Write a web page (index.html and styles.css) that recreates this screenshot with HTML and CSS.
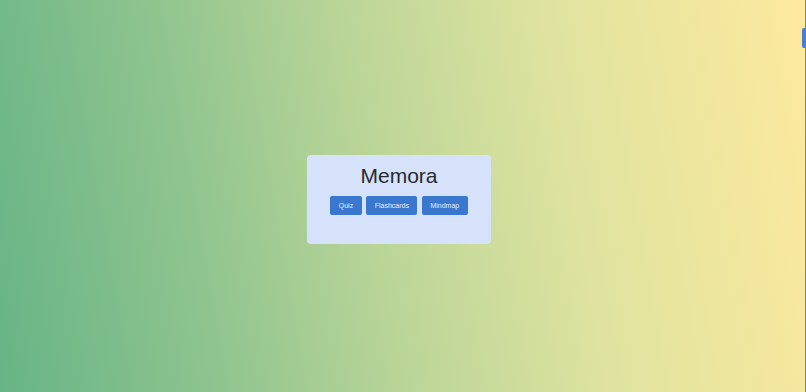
FILE: index.html
```html
<!DOCTYPE html>
<html lang="en">

<head>
    <meta charset="UTF-8">
    <meta name="viewport" content="width=device-width, initial-scale=1.0">
    <title>Memora</title>
    <link rel="stylesheet" href="styles.css">
</head>

<body>
    <div class="page">
        <div class="card">
            <h1 class="title">Memora</h1>
            <div class="menu">
                <button class="btn">Quiz</button>
                <button class="btn">Flashcards</button>
                <button class="btn">Mindmap</button>
            </div>
        </div>
    </div>
    <div class="edge"></div>
    <div class="tab"></div>
</body>

</html>
```

FILE: styles.css
```css
html,
body {
    margin: 0;
    padding: 0;
    height: 100%;
}

body {
    font-family: "Liberation Sans", Arial, sans-serif;
    background: linear-gradient(80deg, #67b486 0%, #8fc48f 25%, #bbd598 47%, #dfe39f 70%, #fde99e 100%);
    overflow: hidden;
}

.page {
    height: 100%;
    width: 798px;
    display: flex;
    align-items: center;
    justify-content: center;
    padding-top: 7px;
    box-sizing: border-box;
}

.card {
    width: 184px;
    box-sizing: border-box;
    padding: 7px 0 29px;
    background: #d6e2f9;
    border-radius: 4px;
    text-align: center;
}

.title {
    margin: 0;
    font-size: 21px;
    line-height: 28px;
    font-weight: 400;
    color: #272a33;
}

.menu {
    margin-top: 6px;
    display: flex;
    justify-content: center;
    gap: 4.5px;
}

.btn {
    height: 19px;
    padding: 0 8.5px;
    border: 0;
    border-radius: 2px;
    background: #3a77cf;
    color: #e6eefb;
    font-family: "Liberation Sans", Arial, sans-serif;
    font-size: 7px;
}

.edge {
    position: absolute;
    top: 0;
    right: 0;
    width: 1px;
    height: 100%;
    background: #8a8a5e;
}

.tab {
    position: absolute;
    top: 28px;
    right: 0;
    width: 4px;
    height: 20px;
    background: #4a7fd0;
    border-radius: 2px 0 0 2px;
}
```
